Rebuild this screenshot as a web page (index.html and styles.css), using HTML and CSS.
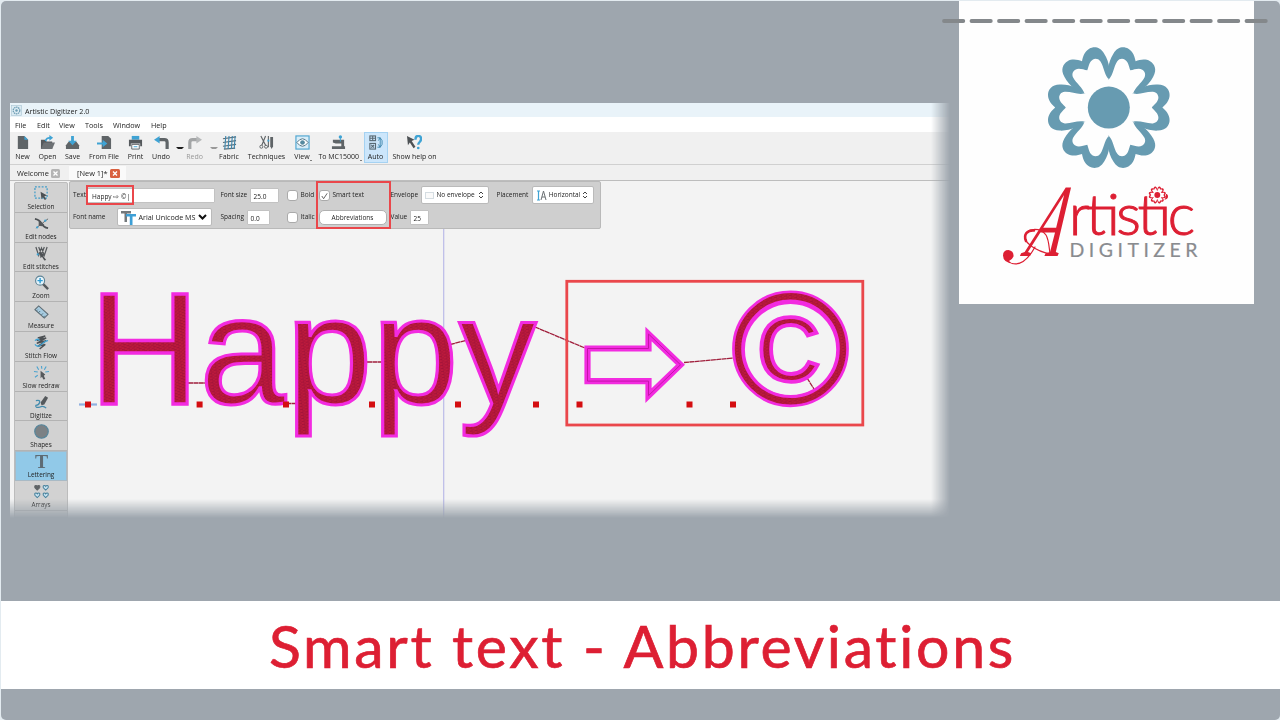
FILE: index.html
```html
<!DOCTYPE html>
<html lang="en">
<head>
    <meta charset="UTF-8">
    <title>Smart text - Abbreviations</title>
    <link rel="stylesheet" href="styles.css">
</head>
<body>
<div class="slide">
    <div class="top">
        <div class="window">
            <div class="titlebar">
                <svg width="11" height="11" viewBox="0 0 11 11"><rect x=".5" y=".5" width="10" height="10" fill="#dcebf3" stroke="#a9c4d2" stroke-width=".6"/><circle cx="5.500" cy="5.500" r="3.300" fill="none" stroke="#6b9cb3" stroke-width="1.200" stroke-dasharray="1.500 .6"/><circle cx="5.500" cy="5.500" r="1.200" fill="#6b9cb3"/></svg>
                <span>Artistic Digitizer 2.0</span>
            </div>
            <div class="menu">
                <span class="m1">File</span><span class="m2">Edit</span><span class="m3">View</span><span class="m4">Tools</span><span class="m5">Window</span><span>Help</span>
            </div>
            <div class="toolbar">
                <div class="tool w25">
                    <svg viewBox="0 0 16 16"><path d="M3 1h7l4 4v10H3z" fill="#5f6467"/><path d="M10 1v4h4z" fill="#3fa3d4"/></svg>
                    <span>New</span>
                </div>
                <div class="tool w25">
                    <svg viewBox="0 0 16 16"><path d="M1 5h5l1 2h6v8H1z" fill="#55595c"/><path d="M4 8h12l-3 7H1z" fill="#6d7174"/><path d="M5 6c1-3 3-4 5-4V0l4 3-4 3V4C8 4 7 5 7 7z" fill="#3fa3d4"/></svg>
                    <span>Open</span>
                </div>
                <div class="tool w25">
                    <svg viewBox="0 0 16 16"><path d="M4 7h8l3 4v4H1v-4z" fill="#5f6467"/><path d="M6.500 1h3v5h3L8 11 3.500 6h3z" fill="#3fa3d4"/></svg>
                    <span>Save</span>
                </div>
                <div class="tool w38">
                    <svg viewBox="0 0 16 16"><path d="M5 1h7l3 3v11H5z" fill="#5f6467"/><path d="M0 8h6V5l5 4-5 4v-3H0z" fill="#3fa3d4"/></svg>
                    <span>From File</span>
                </div>
                <div class="tool w25">
                    <svg viewBox="0 0 16 16"><path d="M4 1h8v4H4z" fill="#3fa3d4"/><path d="M1 5h14v7h-2V9H3v3H1z" fill="#55595c"/><path d="M4 10h8v5H4z" fill="#fff" stroke="#5f6467"/><path d="M6 12.500h4" stroke="#3fa3d4"/></svg>
                    <span>Print</span>
                </div>
                <div class="tool w26">
                    <svg viewBox="0 0 16 16"><path d="M5 5h6q3 0 3 3v7" fill="none" stroke="#5f6467" stroke-width="3.400"/><path d="M6 1v8L0 5z" fill="#3fa3d4"/></svg>
                    <span>Undo</span>
                </div>
                <div class="drop"></div>
                <div class="tool w25 off">
                    <svg viewBox="0 0 16 16"><path d="M11 5H6Q3 5 3 8v7" fill="none" stroke="#a3a5a6" stroke-width="3.400"/><path d="M10 1v8l6-4z" fill="#b6b8b9"/></svg>
                    <span>Redo</span>
                </div>
                <div class="drop off"></div>
                <div class="tool w28">
                    <svg viewBox="0 0 16 16"><path d="M1 4l14-2M1 8l14-2M1 12l14-2M2 15l12-1" stroke="#5e6b73" stroke-width="1.300"/><path d="M4 1L3 15M7.500 1l-1 14M11 1l-1 14M14 1l-1 14" stroke="#3f88ae" stroke-width="1.200"/></svg>
                    <span>Fabric</span>
                </div>
                <div class="tool w47">
                    <svg viewBox="0 0 16 16"><path d="M2 1l5 10M7 1L3 11M10 1v12" stroke="#5f6467" stroke-width="1.200"/><circle cx="2.500" cy="12.500" r="1.600" fill="none" stroke="#5f6467"/><circle cx="7.500" cy="12.500" r="1.600" fill="none" stroke="#5f6467"/><path d="M12 2h3v10l-1.500 3L12 12z" fill="#5f6467"/><path d="M9 6h2" stroke="#3fa3d4" stroke-width="2"/></svg>
                    <span>Techniques</span>
                </div>
                <div class="tool w24">
                    <svg viewBox="0 0 16 16"><rect x="1" y="1" width="14" height="14" fill="#d8edf8" stroke="#4ba3cf" stroke-width="1.200"/><path d="M2 8q6-8 12 0-6 8-12 0z" fill="#fff" stroke="#4a6d7f"/><circle cx="8" cy="8" r="2.500" fill="#55899f"/></svg>
                    <span>View</span><i class="corner"></i>
                </div>
                <div class="tool w49">
                    <svg viewBox="0 0 16 16"><path d="M2 5h12v7h-3V9H5L2 8zM1 12h14v3H1z" fill="#5f6467"/><circle cx="10" cy="2" r="1.800" fill="#3fa3d4"/><path d="M10 3v4" stroke="#3fa3d4"/></svg>
                    <span>To MC15000</span><i class="corner"></i>
                </div>
                <div class="tool w24 active">
                    <svg viewBox="0 0 16 16"><g fill="none" stroke="#596a74" stroke-width="1.200"><rect x="2" y="1" width="6" height="5"/><path d="M5 1v5M2 3.500h6"/><rect x="2" y="9" width="6" height="6"/><path d="M3.500 10.500l3 3M6.500 10.500l-3 3"/></g><path d="M10 3h3M10 13h3M13 3v10M11 6l2-3 2 3v4l-2 3-2-3" fill="none" stroke="#3f87ad" stroke-width="1"/></svg>
                    <span>Auto</span>
                </div>
                <div class="tool w54">
                    <svg viewBox="0 0 16 16"><path d="M0 1l8 4-3 1.500 4 6-2 1.500-4-6-2 3z" fill="#4d5154"/><path d="M9 5q0-4 3-4t3 3q0 2-1.500 3.500T12 10.500" fill="none" stroke="#3fa3d4" stroke-width="2.500"/><circle cx="12" cy="13.800" r="1.400" fill="#3fa3d4"/></svg>
                    <span>Show help on</span>
                </div>
            </div>
            <div class="tabs">
                <div class="tab welcome"><span>Welcome</span><svg width="9" height="9" viewBox="0 0 9 9"><rect width="9" height="9" rx="1.500" fill="#b4b4b4"/><path d="M2.500 2.500l4 4M6.500 2.500l-4 4" stroke="#fff" stroke-width="1.300"/></svg></div>
                <div class="tab current"><span>[New 1]*</span><svg width="10" height="9" viewBox="0 0 10 9"><rect width="10" height="9" rx="1.500" fill="#d9603f"/><path d="M3 2.500l4 4M7 2.500l-4 4" stroke="#fff" stroke-width="1.300"/></svg></div>
            </div>
            <div class="work">
                <div class="sidebar">
                    <div class="side">
                        <svg viewBox="0 0 16 16"><rect x="1" y="1" width="13" height="12" fill="none" stroke="#3f9cc9" stroke-width="1.300" stroke-dasharray="2 1.600"/><path d="M7 6l7 4-3 1 2 3-1.500 1L9.500 12 8 14z" fill="#4d5154"/></svg>
                        <span>Selection</span>
                    </div>
                    <div class="side">
                        <svg viewBox="0 0 16 16"><path d="M1 3q5 1 7 5t7 5" fill="none" stroke="#4d5154" stroke-width="1.800"/><path d="M15 3L2 13" stroke="#5f6467"/><path d="M5 5l6 4-3 2-3-1z" fill="#55595c"/><circle cx="12" cy="5" r="1.200" fill="#3fa3d4"/><circle cx="3.500" cy="12" r="1.200" fill="#3fa3d4"/></svg>
                        <span>Edit nodes</span>
                    </div>
                    <div class="side">
                        <svg viewBox="0 0 16 16"><path d="M2 1l3 9 3-8 3 8 3-9M5 1l3 8 3-8" fill="none" stroke="#55595c" stroke-width="1.300"/><path d="M6 7l5 2-1 2 3 4-2 .5-2.500-4L7 13z" fill="#4d5154"/><circle cx="4" cy="9" r="1.200" fill="#3fa3d4"/></svg>
                        <span>Edit stitches</span>
                    </div>
                    <div class="side">
                        <svg viewBox="0 0 16 16"><path d="M9 9l6 6" stroke="#55595c" stroke-width="2.600"/><circle cx="6.500" cy="6" r="4.800" fill="#e6f4fb" stroke="#5f8496" stroke-width="1.200"/><path d="M6.500 3.200v5.600M3.700 6h5.600" stroke="#2c9bd4" stroke-width="1.500"/></svg>
                        <span>Zoom</span>
                    </div>
                    <div class="side">
                        <svg viewBox="0 0 16 16"><path d="M1 5l4-4 10 9-4 4z" fill="#a6cbe0" stroke="#5d6b73" stroke-width="1.100"/><path d="M5 8l1.500-1.500M8 10.500L9.500 9M3 6l1-1M10 13l1.500-1.500" stroke="#46626f"/></svg>
                        <span>Measure</span>
                    </div>
                    <div class="side">
                        <svg viewBox="0 0 16 16"><path d="M4 3l8-2-9 5 10-3L3 9l10-3-9 6 8-2-6 5" fill="none" stroke="#4d5154" stroke-width="1.500"/><path d="M1 10q3 4 7 0t7-4M1 6q3-3 5 0" fill="none" stroke="#3fa3d4" stroke-width="1.400"/></svg>
                        <span>Stitch Flow</span>
                    </div>
                    <div class="side">
                        <svg viewBox="0 0 16 16"><path d="M7 6l5 4-1.500 1.500L12 15l-2 .5-1.500-3L7 14z" fill="#55595c"/><path d="M8 1l.3 3M3 1.500L5 5M13 1.500L11 5M0 7l4 .5M12 7.500L16 7M1 13l3-2" stroke="#4ba3cf" stroke-width="1.200"/></svg>
                        <span>Slow redraw</span>
                    </div>
                    <div class="side">
                        <svg viewBox="0 0 16 16"><path d="M7 8l5-7 3 2-4 7-3 1z" fill="#55595c"/><path d="M2 6q5-1 4 2t-4 3q-1 3 4 2 4-2 7 1" fill="none" stroke="#438bad" stroke-width="1.300"/></svg>
                        <span>Digitize</span>
                    </div>
                    <div class="side">
                        <svg viewBox="0 0 16 16"><circle cx="8" cy="8" r="7.200" fill="#7b8185" stroke="#56869c" stroke-width="1.300"/></svg>
                        <span>Shapes</span>
                    </div>
                    <div class="side picked">
                        <svg viewBox="0 0 16 16"><text x="8" y="14.500" text-anchor="middle" class="bigt">T</text></svg>
                        <span>Lettering</span>
                    </div>
                    <div class="side">
                        <svg viewBox="0 0 16 16"><g stroke-width="1.100"><path d="M3.500 6.500L1 4Q.3 1.500 2 1.500 3 1.500 3.500 2.500 4 1.500 5 1.500 6.700 1.500 6 4z" fill="#5f6467" stroke="#5f6467"/><path d="M12.500 6.500L10 4Q9.300 1.500 11 1.500q1 0 1.500 1 .5-1 1.500-1 1.700 0 1 2.500zM3.500 14.500L1 12Q.3 9.500 2 9.500q1 0 1.500 1 .5-1 1.500-1 1.700 0 1 2.500zM12.500 14.500L10 12Q9.300 9.500 11 9.500q1 0 1.500 1 .5-1 1.500-1 1.700 0 1 2.500z" fill="#c9e4f2" stroke="#46819c"/></g></svg>
                        <span>Arrays</span>
                    </div>
                </div>

                <div class="canvas">
                    <svg class="drawing" width="881" height="337" viewBox="68 181 881 337">
                        <defs>
                            <pattern id="stitch" width="5" height="3" patternUnits="userSpaceOnUse" patternTransform="rotate(-8)">
                                <rect width="5" height="3" fill="#bd1a3c"/>
                                <path d="M0 .5h3M2 2h3" stroke="#9c1238" stroke-width=".8"/>
                            </pattern>
                        </defs>
                        <path d="M443.700 180v338" stroke="#bbbbe8" stroke-width="1.200"/>
                        <g class="jump">
                            <path d="M188 383h18M281 403.500h17M367 362h15M450 344.500l16-4M535 327l50 21M684 362.500l50-4.500M807 378l7 11"/>
                        </g>
                        <path d="M79 404.500h18" stroke="#8fb0e0" stroke-width="2.200"/>
                        <g class="happy">
                            <text transform="translate(89.500 404.200) scale(.985 1.036)">H</text>
                            <text x="199.700 286.200 372.200 459" y="404.200">appy</text>
                            <text x="733.400" y="402.500" class="copy">©</text>
                            <circle cx="790.500" cy="348.800" r="52.500" fill="none" stroke="#f22be0" stroke-width="11.800"/>
                            <circle cx="790.500" cy="348.800" r="52.500" fill="none" stroke="url(#stitch)" stroke-width="6.400"/>
                        </g>
                        <path d="M587.500 348.500h61v-14.500l32 30.800-32 30.800v-14.500h-61z" fill="none" stroke="#f22be0" stroke-width="6.200" stroke-miterlimit="4"/>
                        <path d="M587.500 348.500h61v-14.500l32 30.800-32 30.800v-14.500h-61z" fill="none" stroke="#c414a8" stroke-width="1"/>
                        <path d="M85 401.500h6v6h-6zM196.600 401.500h6v6h-6zM283 401.500h6v6h-6zM369 401.500h6v6h-6zM455 401.500h6v6h-6zM533 401.500h6v6h-6zM576.500 401.500h6v6h-6zM686.500 401.500h6v6h-6zM730 401.500h6v6h-6z" fill="#d40d10"/>
                        <rect x="566.800" y="281.300" width="296" height="143.700" fill="none" stroke="#ea474b" stroke-width="2.800"/>
                    </svg>

                    <div class="panel">
                        <div class="opt"><label class="l14">Text</label><div class="field text">Happy ⇨ ©|</div></div>
                        <div class="opt"><label class="l31">Font size</label><div class="field f29">25.0</div></div>
                        <div class="opt"><i class="check"></i><label>Bold</label></div>
                        <div class="opt"><i class="check"><svg width="10" height="10" viewBox="0 0 10 10"><path d="M2 5l2 3 4-6" fill="none" stroke="#555" stroke-width="1"/></svg></i><label>Smart text</label></div>
                        <div class="opt"><label class="l32">Envelope</label><div class="select s68"><svg width="9" height="7" viewBox="0 0 9 7"><rect x=".5" y=".5" width="8" height="6" fill="#fafafa" stroke="#d5dde2"/></svg><span>No envelope</span><svg width="6" height="8" viewBox="0 0 6 8"><path d="M1 3l2-2 2 2M1 5l2 2 2-2" fill="none" stroke="#444"/></svg></div></div>
                        <div class="opt"><label class="l36">Placement</label><div class="select s62"><svg width="11" height="11" viewBox="0 0 11 11"><path d="M1 1h3M2.500 1v9M1 10h3" stroke="#3fa3d4" stroke-width="1.200"/><path d="M5 10l2.500-9L10 10M6 7h3" fill="none" stroke="#6b7073"/></svg><span>Horizontal</span><svg width="6" height="8" viewBox="0 0 6 8"><path d="M1 3l2-2 2 2M1 5l2 2 2-2" fill="none" stroke="#444"/></svg></div></div>

                        <div class="opt"><label class="l46">Font name</label><div class="select s95"><svg width="15" height="15" viewBox="0 0 15 15"><path d="M0 1h10v2.500H6V12H3.500V3.500H0z" fill="#74797c"/><path d="M5 4h10v2.500h-3.500V15H8.800V6.500H5z" fill="#3d9fd6"/></svg><span>Arial Unicode MS</span><svg width="9" height="6" viewBox="0 0 9 6"><path d="M1 1l3.500 3.500L8 1" fill="none" stroke="#111" stroke-width="2"/></svg></div></div>
                        <div class="opt"><label class="l27">Spacing</label><div class="field f23">0.0</div></div>
                        <div class="opt"><i class="check"></i><label>Italic</label></div>
                        <div class="opt"><div class="button">Abbreviations</div></div>
                        <div class="opt"><label class="l19">Value</label><div class="field f19">25</div></div>
                        <div class="mark mark-text"></div>
                        <div class="mark mark-smart"></div>
                    </div>
                </div>
            </div>
        </div>

        <div class="card">
            <svg width="295" height="304" viewBox="959 0 295 304">
                <defs>
                    <path id="outer" d="M0 0L24.600-14C29-18.500 38-23.500 49-23C57.500-23 60.800-17.500 60.800-12.500C60.800-7 57-3 53.600 0C57 3 60.800 7 60.800 12.500C60.800 17.500 57.500 23 49 23C38 23.500 29 18.500 24.600 14z"/>
                    <path id="inner" d="M0 0L24.600-14C31-12.500 37-16 44-15.800C48-15.500 49.600-12.500 49.600-10C49.600-6 45.500-3 43 0C45.500 3 49.600 6 49.600 10C49.600 12.500 48 15.500 44 15.800C37 16 31 12.500 24.600 14z"/>
                    <g id="flower">
                        <g fill="currentColor"><use href="#outer"/><use href="#outer" transform="rotate(60)"/><use href="#outer" transform="rotate(120)"/><use href="#outer" transform="rotate(180)"/><use href="#outer" transform="rotate(240)"/><use href="#outer" transform="rotate(300)"/></g>
                        <g fill="#fefefe"><use href="#inner"/><use href="#inner" transform="rotate(60)"/><use href="#inner" transform="rotate(120)"/><use href="#inner" transform="rotate(180)"/><use href="#inner" transform="rotate(240)"/><use href="#inner" transform="rotate(300)"/><circle r="27.500"/></g>
                        <circle r="21" fill="currentColor"/>
                    </g>
                </defs>
                <use href="#flower" transform="translate(1108.800 107.600)" color="#679bb1"/>
                <text class="script" transform="translate(1023 255.500) skewX(-19) scale(.86 1.570)">A</text>
                <g fill="none" stroke="#dd1f33" stroke-linecap="round">
                    <path d="M1012 263.500C1022 266 1029 258 1035 247" stroke-width="1.200"/>
                    <path d="M1050 254C1036 251 1024 243 1025 236C1026 228 1040 227 1046 235C1049 240 1049 247 1050 254" stroke-width="1.200"/>
                    <path d="M1026 241C1023 234 1028 230 1034 230.500" stroke-width="2.600"/>
                </g>
                <path d="M1014 264Q1003 263 1003 255.500Q1003 250 1008.500 250Q1014 251 1013.500 256.500Q1012 260 1009 261Q1011 263 1014 264z" fill="#dd1f33"/>
                <text class="rtistic" x="1069" y="235" textLength="126" lengthAdjust="spacing">rtistic</text>
                <circle cx="1157" cy="195" r="9" fill="#fefefe"/>
                <use href="#flower" transform="translate(1157.300 195) scale(.14)" color="#dd1f33"/>
                <text class="digitizer" x="1069.500" y="257" textLength="128" lengthAdjust="spacing">DIGITIZER</text>
            </svg>
        </div>
        <svg class="seam" width="330" height="6" viewBox="0 0 330 6"><path d="M4 3h322" stroke="#84888b" stroke-width="3.800" stroke-linecap="round" stroke-dasharray="19.300 8.200"/></svg>
    </div>
    <div class="banner">
        <h1>Smart text - Abbreviations</h1>
    </div>
</div>
</body>
</html>
```
FILE: styles.css
```css
* {
    box-sizing: border-box;
}
body {
    margin: 0;
    background-color: #e3ebf0;
    font-family: "Open Sans", "Noto Sans", sans-serif;
    overflow: hidden;
}
.slide {
    display: flex;
    flex-direction: column;
    width: 1279px;
    height: 719px;
    margin: 1px 0 0 1px;
    background-color: #9ea6ae;
    border-radius: 5px;
    overflow: hidden;
}
.top {
    position: relative;
    display: flex;
    height: 600px;
    gap: 8px;
    padding-left: 9px;
}

/* program window */
.window {
    width: 941px;
    height: 417px;
    margin-top: 102px;
    background-color: #f0f0f0;
    color: #1d1d1d;
    font-size: 7px;
    line-height: 10px;
    white-space: nowrap;
    overflow: hidden;
    -webkit-mask-image: linear-gradient(to right, #000 921px, transparent 940px), linear-gradient(to bottom, #000 396px, transparent 415px);
    -webkit-mask-composite: source-in;
    mask-image: linear-gradient(to right, #000 921px, transparent 940px), linear-gradient(to bottom, #000 396px, transparent 415px);
    mask-composite: intersect;
}
.titlebar {
    display: flex;
    align-items: center;
    gap: 3px;
    height: 14px;
    padding: 1px 0 0 1px;
    background-color: #e9f3f9;
    font-size: 7.200px;
}
.menu {
    display: flex;
    align-items: center;
    height: 15px;
    padding-left: 5px;
    background-color: #fff;
    font-size: 7.200px;
}
.m1 { width: 22px; }
.m2 { width: 22px; }
.m3 { width: 26px; }
.m4 { width: 28px; }
.m5 { width: 38px; }

.toolbar {
    display: flex;
    height: 33px;
    border-bottom: 1px solid #d0d0d0;
}
.tool {
    position: relative;
    display: flex;
    flex-direction: column;
    align-items: center;
    height: 31px;
    padding-top: 3px;
    gap: 2px;
}
.tool svg {
    width: 15px;
    height: 15px;
}
.w24 { width: 24px; }
.w25 { width: 25px; }
.w26 { width: 26px; }
.w28 { width: 28px; }
.w38 { width: 38px; }
.w47 { width: 47px; }
.w49 { width: 49.500px; }
.w54 { width: 54px; }
.active {
    background-color: #cce6fb;
    border: 1px solid #a5d2f2;
    padding-top: 2px;
}
.off {
    color: #999;
}
.drop {
    width: 8px;
    padding: 15px 2px 0;
}
.drop::after {
    content: "";
    display: block;
    width: 4px;
    height: 4px;
    border: 2px solid transparent;
    border-top-color: currentColor;
}
.drop.off {
    padding-left: 3px;
}
.corner {
    position: absolute;
    right: 2px;
    bottom: 1px;
    border: 1.500px solid transparent;
    border-top-color: #111;
}

.tabs {
    display: flex;
    height: 16px;
    padding-top: 1px;
    border-bottom: 1px solid #bdbdbd;
    font-size: 7.400px;
}
.tab {
    display: flex;
    align-items: center;
    gap: 2px;
}
.welcome {
    width: 59px;
    padding-left: 7px;
}
.current {
    width: 57px;
    padding-left: 8px;
    background-color: #fafafa;
}

.work {
    display: flex;
    height: 337px;
    background-color: #f3f3f3;
}
.sidebar {
    width: 54px;
    margin: 1px 1px 0 4px;
    background-color: #d2d2d2;
    border: 1px solid #bcbcbc;
    border-radius: 2px 2px 0 0;
}
.side {
    display: flex;
    flex-direction: column;
    align-items: center;
    height: 29.800px;
    padding-top: 3px;
    border-bottom: 1px solid #b3b3b3;
    font-size: 6.400px;
}
.side svg {
    width: 15px;
    height: 15px;
    margin-bottom: 1px;
    overflow: visible;
}
.picked {
    background-color: #91c9e8;
    border: 1px solid #a9bac5;
    padding-top: 2px;
}
.bigt {
    font: bold 21px "Liberation Serif", serif;
    fill: #5e6b74;
}

.canvas {
    position: relative;
}
.drawing {
    display: block;
    margin-left: -1px;
}
.happy text {
    font: 154.700px "Liberation Sans", sans-serif;
    fill: url(#stitch);
    stroke: #f22be0;
    stroke-width: 3.200px;
}
.happy .copy {
    stroke-width: 3.800px;
}
.jump path {
    fill: none;
    stroke: #a01f3c;
    stroke-width: 1.300px;
    stroke-dasharray: 5 .4;
}

/* lettering options floating over the drawing */
.panel {
    position: absolute;
    left: 0;
    top: 0;
    display: grid;
    grid-template-columns: 147.500px 66px 32px 72px 106px 105px;
    grid-template-rows: 22px 22px;
    width: 532px;
    height: 48px;
    padding: 2px 0 0 3px;
    background-color: #cfcfcf;
    border: 1px solid #b9b9b9;
    border-radius: 2px;
    font-size: 6.500px;
}
.opt {
    display: flex;
    align-items: center;
}
.l14 { width: 14px; }
.l19 { width: 19px; }
.l27 { width: 26px; }
.l31 { width: 29px; }
.l32 { width: 30px; }
.l36 { width: 35px; }
.l46 { width: 44px; }
.field {
    height: 15px;
    padding: 3px 0 0 3px;
    background-color: #fff;
    border: 1px solid #c2c2c2;
    border-radius: 1px;
}
.text {
    width: 128px;
    padding-left: 4px;
}
.f29 { width: 29px; }
.f23 { width: 23px; }
.f19 { width: 19px; }
.check {
    display: flex;
    width: 11px;
    height: 11px;
    margin-right: 3px;
    background-color: #fff;
    border: 1px solid #aaa;
    border-radius: 3px;
}
.select {
    display: flex;
    align-items: center;
    justify-content: space-between;
    height: 18.500px;
    padding: 0 4px 0 3px;
    background-color: #fff;
    border: 1px solid #bababa;
    border-radius: 2px;
}
.s62 { width: 62px; }
.s68 { width: 68px; }
.s95 {
    width: 95px;
    font-size: 7.200px;
}
.button {
    width: 68px;
    height: 15px;
    background-color: #fff;
    border: 1px solid #b0b0b0;
    border-radius: 5px;
    text-align: center;
    line-height: 13px;
}
.mark {
    position: absolute;
    border: 2px solid #ea474b;
}
.mark-text {
    left: 16px;
    top: 3px;
    width: 48px;
    height: 20px;
}
.mark-smart {
    left: 246px;
    top: -1px;
    width: 75px;
    height: 48px;
}

/* logo */
.card {
    width: 295px;
    height: 303px;
    background-color: #fefefe;
}
.card svg {
    display: block;
    margin-top: -1px;
}
.script {
    font: italic 66px "Liberation Serif", serif;
    fill: #dd1f33;
}
.rtistic {
    font: 300 58px Lato, sans-serif;
    fill: #dd1f33;
    stroke: #dd1f33;
    stroke-width: 1px;
}
.digitizer {
    font: 400 19.500px Lato, sans-serif;
    fill: #898b8f;
    stroke: #898b8f;
    stroke-width: .2px;
}
.seam {
    position: absolute;
    left: 939px;
    top: 17px;
}

.banner {
    height: 88px;
    background-color: #fff;
    text-align: center;
}
h1 {
    margin: 0;
    padding-left: 4px;
    color: #dd1f33;
    font: 400 59px/90px Lato, sans-serif;
    letter-spacing: 2.700px;
    white-space: nowrap;
    -webkit-text-stroke: .7px #dd1f33;
}
```
